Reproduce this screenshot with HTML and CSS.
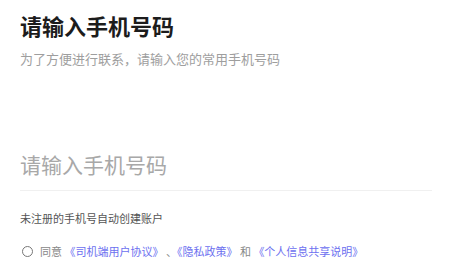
FILE: index.html
```html
<!DOCTYPE html>
<html lang="zh-CN">
<head>
  <meta charset="UTF-8" />
  <meta name="viewport" content="width=device-width, initial-scale=1.0"/>
  <title>登录</title>
  <link rel="stylesheet" href="styles.css">
</head>
<body>
  <div class="pagina">
    <h1 class="titulo">请输入手机号码</h1>
    <p class="subtitulo">为了方便进行联系，请输入您的常用手机号码</p>

    <div class="campo">
      <input type="tel" class="entrada" placeholder="请输入手机号码">
    </div>

    <p class="aviso">未注册的手机号自动创建账户</p>

    <label class="acordo">
      <span class="circulo"></span>
      <span>同意 <a href="#">《司机端用户协议》</a> 、<a href="#">《隐私政策》</a> 和 <a href="#">《个人信息共享说明》</a></span>
    </label>
  </div>
</body>
</html>
```

FILE: styles.css
```css
* {
  margin: 0;
  padding: 0;
  box-sizing: border-box;
  font-family: "Noto Sans CJK SC", "Noto Sans", sans-serif;
}

body {
  background: #fff;
  color: #222;
}

.pagina {
  padding: 10px 18px 0 20px;
  display: flex;
  flex-direction: column;
}

.titulo {
  font-size: 22px;
  line-height: 30px;
  font-weight: 700;
  color: #1c1c1c;
}

.subtitulo {
  margin-top: 10px;
  font-size: 13px;
  line-height: 18px;
  color: #9e9e9e;
}

.campo {
  margin-top: 72px;
  border-bottom: 1px solid #f0f0f0;
}

.entrada {
  width: 100%;
  border: none;
  outline: none;
  font-size: 21px;
  line-height: 30px;
  height: 50px;
  padding-bottom: 2px;
  color: #333;
  background: transparent;
}

.entrada::placeholder {
  color: #a8a8a8;
}

.aviso {
  margin-top: 19px;
  font-size: 11px;
  line-height: 16px;
  color: #555;
}

.acordo {
  margin-top: 17px;
  display: flex;
  align-items: center;
  gap: 7px;
  font-size: 11px;
  line-height: 16px;
  color: #888;
}

.circulo {
  width: 11px;
  height: 11px;
  border: 1.3px solid #777;
  border-radius: 50%;
  margin-left: 2px;
  flex-shrink: 0;
}

.acordo a {
  color: #6c70f0;
  text-decoration: none;
}
```
